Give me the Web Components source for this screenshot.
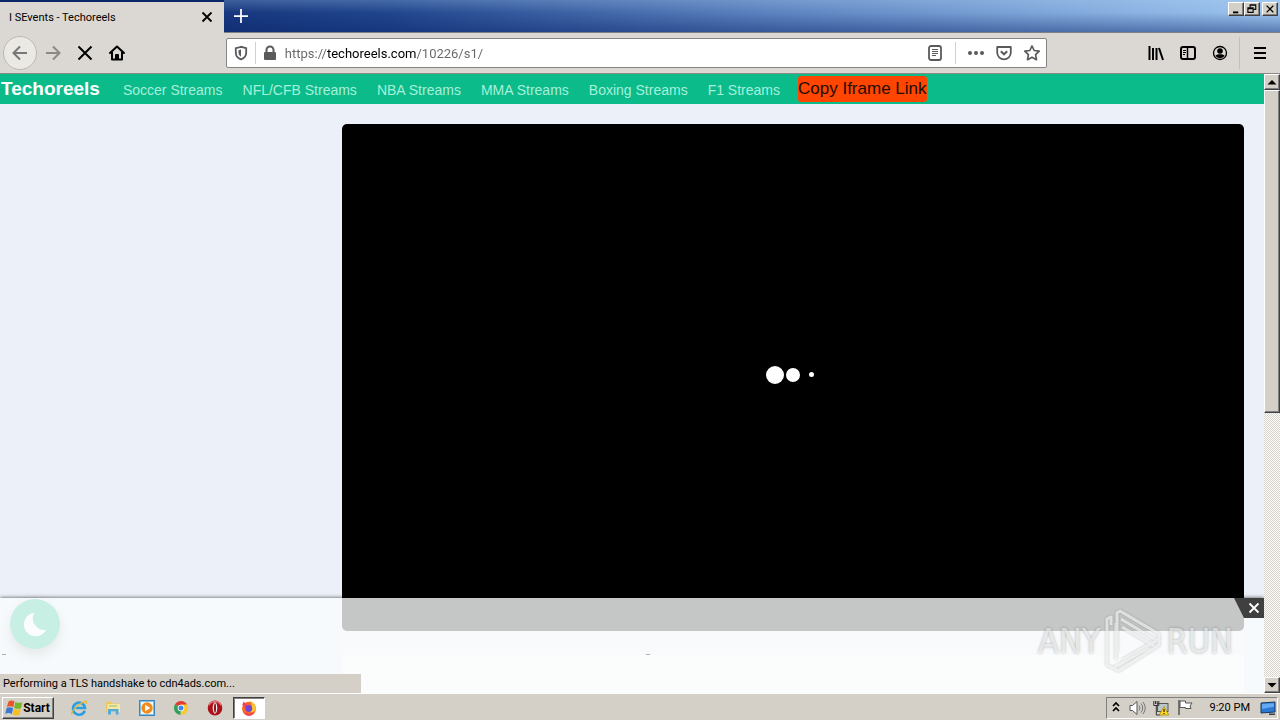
<!DOCTYPE html>
<html lang="en">
<head>
<meta charset="utf-8">
<title>I SEvents - Techoreels</title>
<style>
  html, body {
    height: 100%;
    margin: 0;
  }
  body {
    --face: #d4d0c8;
    --ui: Roboto, "Liberation Sans", sans-serif;
    font-family: "Liberation Sans", sans-serif;
    display: flex;
    flex-direction: column;
    overflow: hidden;
  }
  browser-view { flex: 1; }
</style>
</head>
<body>
<tab-strip></tab-strip>
<tool-bar></tool-bar>
<browser-view>
  <site-nav>
    <a href="#soccer">Soccer Streams</a>
    <a href="#nfl">NFL/CFB Streams</a>
    <a href="#nba">NBA Streams</a>
    <a href="#mma">MMA Streams</a>
    <a href="#boxing">Boxing Streams</a>
    <a href="#f1">F1 Streams</a>
    <button slot="action" type="button">Copy Iframe Link</button>
  </site-nav>
  <stream-page></stream-page>
  <theme-toggle slot="float"></theme-toggle>
  <ad-banner slot="float"></ad-banner>
  <any-run slot="float"></any-run>
  <status-tip slot="float">Performing a TLS handshake to cdn4ads.com...</status-tip>
</browser-view>
<task-bar></task-bar>

<script>
const ICONS = {
  close: '<path d="M3.5 3.5l9 9M12.5 3.5l-9 9" stroke="currentColor" stroke-width="1.8"/>',
  plus: '<path d="M8 0v16M0 8h16" stroke="currentColor" stroke-width="2"/>',
  back: '<path d="M15 8H1.5M8 1.5L1.5 8 8 14.5" stroke="currentColor" stroke-width="2"/>',
  forward: '<path d="M1 8h13.5M8 1.5L14.5 8 8 14.5" stroke="currentColor" stroke-width="2"/>',
  stop: '<path d="M1.5 1.5l13 13M14.5 1.5l-13 13" stroke="currentColor" stroke-width="2"/>',
  home: '<path d="M1 8L8 1.5 15 8M3 7v7.5h10V7M7 14v-4h2v4" stroke="currentColor" stroke-width="2" stroke-linejoin="round" stroke-linecap="round"/>',
  shield: '<path d="M8 1.8L2.8 3.2v4.3c0 3.5 2.2 5.900 5.200 6.900 3-1 5.200-3.400 5.200-6.900V3.200z" stroke="currentColor" stroke-width="1.8"/><path d="M8 4.600L5.500 5.300v2.500c0 1.600 1 3 2.500 3.900z" fill="currentColor"/>',
  lock: '<path d="M4.500 8V5a3.500 3.500 0 0 1 7 0v3" stroke="currentColor" stroke-width="2"/><rect x="2" y="7" width="12" height="8" rx="1" fill="currentColor"/>',
  reader: '<rect x="2" y="1" width="12" height="14" rx="2" stroke="currentColor" stroke-width="1.8"/><path d="M5 4.500h6M5 6.500h6M5 8.500h6M5 10.500h4" stroke="currentColor"/>',
  dots: '<circle cx="2" cy="8" r="2" fill="currentColor"/><circle cx="8" cy="8" r="2" fill="currentColor"/><circle cx="14" cy="8" r="2" fill="currentColor"/>',
  pocket: '<path d="M1.200 2h13.600v5.500a6.800 6.800 0 0 1-13.600 0z" stroke="currentColor" stroke-width="1.8" stroke-linejoin="round"/><path d="M4.800 6.300L8 9.300l3.200-3" stroke="currentColor" stroke-width="2"/>',
  star: '<path d="M8 1l2.200 4.500 5 .7-3.600 3.500.9 5L8 12.300l-4.500 2.400.9-5L.8 6.200l5-.7z" stroke="currentColor" stroke-width="1.700" stroke-linejoin="round"/>',
  library: '<path d="M1.500 1v14M5 3v12M8.500 3v12M11 3l4 12" stroke="currentColor" stroke-width="2"/>',
  sidebar: '<rect x="1" y="2" width="14" height="12" rx="2" stroke="currentColor" stroke-width="2"/><path d="M7.500 2v12" stroke="currentColor" stroke-width="1.500"/><path d="M3 5.500h3M3 7.500h3M3 9.500h2" stroke="currentColor"/>',
  account: '<circle cx="8" cy="8" r="6.500" stroke="currentColor" stroke-width="1.300"/><circle cx="8" cy="6" r="2.800" fill="currentColor"/><path d="M3.500 10.500c2-1.800 7-1.800 9 0-1 1.900-2.600 2.700-4.500 2.700s-3.500-.8-4.500-2.700z" fill="currentColor"/>',
  menu: '<path d="M2 3h12M2 8h12M2 13h12" stroke="currentColor" stroke-width="2"/>',
  minimize: '<path d="M4 12.500h7" stroke="currentColor" stroke-width="2.500"/>',
  restore: '<path d="M5.500 6V2.500h7.500v6h-3M5 3h8" stroke="currentColor" stroke-width="1.500"/><path d="M2.500 6.500h7v6h-7zM2.500 7.500h7" stroke="currentColor" stroke-width="1.500"/>',
  up: '<path d="M3.500 10.500h9L8 6z" fill="currentColor"/>',
  down: '<path d="M3.500 6h9L8 10.500z" fill="currentColor"/>',
  moon: '<path d="M7.500 1A7.300 7.300 0 1 0 15 11.500 7.200 7.200 0 0 1 7.500 1z" fill="currentColor"/>',
  windows: '<path d="M2.500 1.500C4.500 0 6.500.2 8.500 1.500L7.300 7.300C5.500 6.200 3 6 .8 7z" fill="#e5572a"/><path d="M9.300 2c2 1 4.500 1.200 7 .2L15 8.200c-2 1-4.700.8-6.900-.2z" fill="#76b82c"/><path d="M.6 8c2-1 4.200-.8 6.500.3L5.800 14C3.800 12.800 1.600 12.800-.8 13.700z" fill="#3c78cf"/><path d="M7.800 9c2 1 4.700 1.100 7 .1L13.500 14.700c-2 1-4.700.9-7-.2z" fill="#f5bf22"/>',
  ie: '<path d="M13.700 10.700A6 6 0 1 1 14 8H4.500" stroke="#2b9fdf" stroke-width="2.600"/><path d="M1 14.500C-.5 11.500 8 3 14 1.300c2-.5 1.800 1 1 2.600" stroke="#e6b93a" stroke-width="1.300"/>',
  folder: '<path d="M1 4V1.800h5L7.500 3.500H14V12H1z" fill="#e9c85c"/><path d="M2.500 4H15v8H2.500z" fill="#f8e7a0"/><path d="M3 14.500V9h10.500v5.500h-2.700v-3H6v3z" fill="#54a9dc"/><path d="M4 6h8" stroke="#8fbf74"/>',
  player: '<rect x=".5" y=".5" width="15" height="15" fill="#7fc0e8" stroke="#3a86b8"/><rect x="2" y="2" width="12" height="12" fill="#f4f8fb"/><circle cx="8" cy="8" r="5.700" fill="#f08a18"/><path d="M6.200 4.800v6.400L11.300 8z" fill="#fff"/>',
  chrome: '<path d="M8 8L1.900 4.500A7 7 0 0 1 14.100 4.500z" fill="#df3e31"/><path d="M8 8L1.900 4.500a7 7 0 0 0 5.500 10.500z" fill="#36a156"/><path d="M8 8h3l-3.600 7a7 7 0 0 0 6.700-10.500H8z" fill="#f7c92d"/><circle cx="8" cy="8" r="3.300" fill="#fff"/><circle cx="8" cy="8" r="2.500" fill="#4385ee"/>',
  opera: '<ellipse cx="8" cy="8" rx="7.300" ry="7.500" fill="#ad1119"/><path d="M2 5a7 7 0 0 1 12 0" stroke="#e2747a" stroke-width="1.500"/><ellipse cx="8" cy="8" rx="2.300" ry="5.700" fill="#f2eeee"/><ellipse cx="8" cy="8" rx="1" ry="4.700" fill="#8d1218"/>',
  firefox: '<circle cx="8" cy="8.700" r="7" fill="#fa6b26"/><path d="M9 .5c4 2 6 5 5.800 8.800-1.300 3-4 3.200-6 2.500 3-2 2.500-7 .2-11.300z" fill="#ffc52e"/><path d="M1.200 4.500C2 3.500 2.500 2.600 2.600 1.500c1 1 2 2.300 3.700 2.700L4 8z" fill="#f4425a"/><circle cx="7.800" cy="8.500" r="3.400" fill="#7546d3"/><path d="M2 11c2 3 8 4 11.500.5-1 3-3.500 4.200-5.500 4.200-3 0-5-1.700-6-4.700z" fill="#f43f55"/>',
  chevrons: '<path d="M5 6l3-3 3 3M5 11l3-3 3 3" stroke="currentColor" stroke-width="1.700"/>',
  speaker: '<path d="M1 5.500h2.500L8 1.500v13l-4.500-4H1z" fill="#fff" stroke="#555"/><path d="M10 5.500q2 2.500 0 5M12 3.500q3.500 4.500 0 9M14 2q4.500 6 0 12" stroke="#777"/>',
  network: '<rect x="4.500" y="3.500" width="10.500" height="8" fill="#bcc7cc" stroke="#555"/><path d="M.8 1v4.500h5V1M2.500 1v3M4.200 1v3M3.300 5.500V15h4" stroke="#333"/><path d="M11 6.500L15.800 15H6.200z" fill="#ffd820" stroke="#a88200" stroke-width=".7"/><path d="M11 9v3M11 13v1" stroke="#222" stroke-width="1.200"/>',
  flag: '<path d="M2 0v15" stroke="#555" stroke-width="1.500"/><path d="M3 1h5.500v2H15l-2 3 1 2.500H8.500v-1H3z" fill="#fff" stroke="#555"/>',
  monitor: '<path d="M1 3l14-1v10l-14 1z" fill="#2a78d2" stroke="#17385e"/><path d="M2 4l12-.8v3.500L2 9z" fill="#63aaf0"/><path d="M9 13.500h6v1.500H9z" fill="#384048"/>'
};

const BEVEL = `
  border: 1px solid;
  border-color: #fff #404040 #404040 #fff;
  box-shadow: inset -1px -1px #808080;
  background: var(--face);
`;

function define(name, html) {
  window.customElements.define(name, class extends HTMLElement {
    constructor() {
      super();
      this.attachShadow({ mode: 'open' });
      this.shadowRoot.innerHTML = html;
    }
  });
}

class AppIcon extends HTMLElement {
  constructor() {
    super();
    this.attachShadow({ mode: 'open' });
  }

  connectedCallback() {
    this.shadowRoot.innerHTML = `
      <style>
        :host { display: inline-flex; width: var(--size, 16px); height: var(--size, 16px); flex: none; }
        svg { width: 100%; height: 100%; overflow: visible; }
      </style>
      <svg viewBox="0 0 16 16" fill="none" aria-hidden="true">${ICONS[this.getAttribute('name')]}</svg>
    `;
  }
}
window.customElements.define('app-icon', AppIcon);

define('tab-strip', `
  <style>
    :host {
      display: flex;
      height: 33px;
      box-sizing: border-box;
      border-bottom: 1px solid #7d8087;
      background:
        linear-gradient(rgba(180, 215, 245, 0.25), rgba(20, 50, 120, 0) 40%, rgba(10, 36, 106, 0.45)),
        linear-gradient(90deg, #0a246a, #20458c 30%, #5c82bf 60%, #9cc4ef);
      font: 11px var(--ui);
    }
    .tab {
      display: flex;
      align-items: center;
      justify-content: space-between;
      box-sizing: border-box;
      width: 224px;
      height: 33px;
      padding: 0 9px 1px;
      border-top: 2px solid #0a246a;
      background: #dbd8d3;
    }
    button { padding: 0; border: 0; background: none; display: flex; align-items: center; justify-content: center; }
    .title { font: inherit; color: #000; }
    .new { width: 34px; height: 32px; color: #fff; --size: 14px; }
    .window { margin-left: auto; display: flex; padding: 2px 2px 0 0; --size: 12px; }
    .window button { width: 16px; height: 14px; ${BEVEL} color: #000; }
    .window button:last-child { margin-left: 2px; }
  </style>
  <div class="tab">
    <button class="title">I SEvents - Techoreels</button>
    <button aria-label="Close tab"><app-icon name="close"></app-icon></button>
  </div>
  <button class="new" aria-label="New tab"><app-icon name="plus"></app-icon></button>
  <div class="window">
    <button aria-label="Minimize"><app-icon name="minimize"></app-icon></button>
    <button aria-label="Restore"><app-icon name="restore"></app-icon></button>
    <button aria-label="Close"><app-icon name="close"></app-icon></button>
  </div>
`);

define('url-field', `
  <style>
    :host {
      display: flex;
      align-items: center;
      box-sizing: border-box;
      height: 30px;
      border: 1px solid #858585;
      border-radius: 2px;
      background: #fff;
      color: #5a5a5a;
    }
    button { display: flex; justify-content: center; width: 28px; padding: 0; border: 0; background: none; color: inherit; }
    hr { width: 1px; height: 22px; margin: 0; border: 0; background: #d0d0d0; }
    .actions { margin: 0 6px; }
    input {
      flex: 1;
      min-width: 0;
      padding: 1px 0 0;
      margin-left: 1px;
      border: 0;
      outline: 0;
      font: 13px/20px var(--ui);
      color: #666;
      /* the domain is darker than the rest of the address */
      background: linear-gradient(90deg, #666 42px, #000 42px 131px, #666 131px);
      -webkit-background-clip: text;
      background-clip: text;
      -webkit-text-fill-color: transparent;
    }
  </style>
  <button aria-label="Tracking protection"><app-icon name="shield"></app-icon></button>
  <hr>
  <button aria-label="Site information"><app-icon name="lock"></app-icon></button>
  <input type="text" aria-label="Address" value="https://techoreels.com/10226/s1/">
  <button aria-label="Reader view"><app-icon name="reader"></app-icon></button>
  <hr class="actions">
  <button aria-label="Page actions"><app-icon name="dots"></app-icon></button>
  <button aria-label="Save to Pocket"><app-icon name="pocket"></app-icon></button>
  <button aria-label="Bookmark"><app-icon name="star"></app-icon></button>
`);

define('tool-bar', `
  <style>
    :host {
      display: flex;
      align-items: center;
      box-sizing: border-box;
      height: 41px;
      padding-left: 3px;
      border-bottom: 1px solid #8d8a86;
      background: #dbd8d3;
      color: #000;
    }
    button { display: flex; align-items: center; justify-content: center; box-sizing: border-box; width: 32px; height: 32px; padding: 0; border: 0; background: none; color: inherit; }
    .back { width: 34px; height: 34px; border: 1px solid #bcb8b1; border-radius: 50%; background: #ebe9e4; color: #777; }
    .forward { color: #8b8984; }
    url-field { flex: 821; }
    .space { flex: 93; }
    .menu { margin-left: 3px; border-left: 1px solid #c3bfb8; width: 41px; }
  </style>
  <button class="back" aria-label="Back"><app-icon name="back"></app-icon></button>
  <button class="forward" aria-label="Forward"><app-icon name="forward"></app-icon></button>
  <button aria-label="Stop"><app-icon name="stop"></app-icon></button>
  <button aria-label="Home"><app-icon name="home"></app-icon></button>
  <div class="space"></div>
  <url-field></url-field>
  <div class="space"></div>
  <button aria-label="Library"><app-icon name="library"></app-icon></button>
  <button aria-label="Sidebars"><app-icon name="sidebar"></app-icon></button>
  <button aria-label="Account"><app-icon name="account"></app-icon></button>
  <button class="menu" aria-label="Menu"><app-icon name="menu"></app-icon></button>
`);

define('scroll-bar', `
  <style>
    :host {
      display: flex;
      flex-direction: column;
      width: 16px;
      background: repeating-conic-gradient(#fff 0 25%, #d4d0c8 0 50%) 0 0 / 2px 2px;
    }
    button, .thumb { box-sizing: border-box; width: 16px; padding: 0; ${BEVEL} }
    button { display: flex; align-items: center; justify-content: center; height: 16px; color: #000; }
    .track { flex: 1; }
    .thumb { height: 55%; }
  </style>
  <button aria-label="Scroll up"><app-icon name="up"></app-icon></button>
  <div class="track"><div class="thumb"></div></div>
  <button aria-label="Scroll down"><app-icon name="down"></app-icon></button>
`);

define('browser-view', `
  <style>
    :host { display: flex; min-height: 0; }
    .page {
      position: relative;
      flex: 1;
      min-width: 0;
      overflow: hidden;
      background: #ecf1f9;
    }
  </style>
  <div class="page">
    <slot></slot>
    <slot name="float"></slot>
  </div>
  <scroll-bar></scroll-bar>
`);

define('site-nav', `
  <style>
    :host {
      display: flex;
      align-items: center;
      height: 30px;
      padding-left: 1px;
      background: #0bbb89;
    }
    .brand { margin-right: 23px; font-size: 19px; font-weight: bold; color: #fff; text-decoration: none; }
    nav { display: flex; gap: 20px; margin-right: 18px; padding-top: 2px; }
    ::slotted(a) { font-size: 14px; color: #a5f0dc; text-decoration: none; }
    ::slotted(button) {
      height: 26px;
      padding: 0;
      border: 0;
      border-radius: 3px;
      background: #ff4500;
      color: #220b02;
      font: 17px "Liberation Sans", sans-serif;
    }
  </style>
  <a class="brand" href="#home">Techoreels</a>
  <nav><slot></slot></nav>
  <slot name="action"></slot>
`);

define('video-player', `
  <style>
    :host {
      display: flex;
      align-items: center;
      justify-content: center;
      aspect-ratio: 16 / 9;
      border-radius: 5px;
      background: #000;
    }
    .dots { display: flex; align-items: center; padding-bottom: 6px; }
    .dots span { display: flex; justify-content: center; width: 18px; }
    i { width: var(--d); height: var(--d); border-radius: 50%; background: #fff; }
  </style>
  <div class="dots" role="progressbar" aria-label="Loading">
    <span><i style="--d: 18px"></i></span>
    <span><i style="--d: 14px"></i></span>
    <span><i style="--d: 5px"></i></span>
  </div>
`);

define('stream-page', `
  <style>
    :host { display: flex; padding: 20px 20px 0 0; }
    aside { width: 27.5%; }
    main { flex: 1; background: #f0f1f3; }
    .card { height: 100px; margin-top: 24px; background: #fff; }
  </style>
  <aside></aside>
  <main>
    <video-player></video-player>
    <div class="card"></div>
  </main>
`);

define('theme-toggle', `
  <style>
    :host { position: absolute; left: 10px; bottom: 44px; }
    button {
      display: flex;
      align-items: center;
      justify-content: center;
      width: 50px;
      height: 50px;
      padding: 0;
      border: 0;
      border-radius: 50%;
      background: #0bbb89;
      color: #fff;
      box-shadow: 0 6px 12px rgba(0, 0, 0, 0.35);
      --size: 26px;
    }
  </style>
  <button aria-label="Dark mode"><app-icon name="moon"></app-icon></button>
`);

define('ad-banner', `
  <style>
    :host {
      position: absolute;
      left: 0;
      right: 0;
      bottom: 0;
      height: 95px;
      background: rgba(250, 252, 253, 0.79);
      box-shadow: 0 0 4px rgba(0, 0, 0, 0.7);
    }
    .slots { display: flex; padding: 56px 0 0 2px; }
    .slots div { flex: none; width: 51%; }
    .slots i { display: block; width: 4px; height: 1px; background: #aab0b6; }
    button {
      position: absolute;
      top: 0;
      right: 0;
      display: flex;
      align-items: center;
      justify-content: flex-end;
      width: 30px;
      height: 20px;
      padding: 0 2px 0 0;
      border: 0;
      background: #404040;
      color: #fff;
      clip-path: polygon(0 0, 100% 0, 100% 100%, 10px 100%);
    }
  </style>
  <div class="slots"><div><i></i></div><div><i></i></div></div>
  <button aria-label="Close ad"><app-icon name="close"></app-icon></button>
`);

define('any-run', `
  <style>
    :host {
      position: absolute;
      right: 31px;
      bottom: 20px;
      display: flex;
      align-items: center;
      gap: 4px;
      color: rgba(255, 255, 255, 0.6);
      font: 34px/64px "DejaVu Sans Condensed", "Liberation Sans", sans-serif;
      text-shadow: 0 0 3px rgba(0, 0, 0, 0.3);
      pointer-events: none;
    }
    svg { width: 58px; height: 64px; filter: drop-shadow(0 0 1px rgba(0, 0, 0, 0.35)); }
  </style>
  <span>ANY</span>
  <svg viewBox="0 0 58 64" fill="none" stroke="#fff" stroke-opacity=".65" stroke-width="3" stroke-linejoin="round" aria-hidden="true">
    <path d="M7 16V8L3 10v46l6 3 36-20M13 42V4l3-2 39 23v5l-3 1L17 10M12 14v37M18 18l32 19M18 51l37-21M14 62l-4-3M14 62l41-26v-5"/>
  </svg>
  <span>RUN</span>
`);

define('status-tip', `
  <style>
    :host {
      position: absolute;
      left: 0;
      bottom: 0;
      box-sizing: border-box;
      min-width: 361px;
      padding: 1px 3px 0;
      background: #d4d0c8;
      color: #000;
      font: 11px/18px var(--ui);
    }
  </style>
  <slot></slot>
`);

define('task-bar', `
  <style>
    :host {
      display: flex;
      align-items: center;
      box-sizing: border-box;
      height: 27px;
      padding: 1px 2px 0;
      border-top: 1px solid #fff;
      background: var(--face);
      font: 11px var(--ui);
      color: #000;
    }
    button { display: flex; align-items: center; justify-content: center; box-sizing: border-box; height: 22px; padding: 0; border: 0; background: none; color: inherit; font: inherit; }
    .start { width: 52px; gap: 1px; margin-right: 9px; ${BEVEL} font: bold 12px var(--ui); }
    .apps { display: flex; gap: 2px; }
    .apps button { width: 32px; }
    .apps .active { border: 1px solid; border-color: #404040 #fff #fff #404040; background: #fff; box-shadow: inset 1px 1px #808080; }
    .tray {
      display: flex;
      align-items: center;
      box-sizing: border-box;
      height: 22px;
      margin-left: auto;
      border: 1px solid;
      border-color: #808080 #fff #fff #808080;
    }
    .tray button { width: 24px; }
    .tray button:first-child { width: 18px; }
    .tray time { margin: 0 9px 0 13px; }
    .tray button:last-child { width: 18px; }
  </style>
  <button class="start"><app-icon name="windows"></app-icon>Start</button>
  <div class="apps">
    <button aria-label="Internet Explorer"><app-icon name="ie"></app-icon></button>
    <button aria-label="Explorer"><app-icon name="folder"></app-icon></button>
    <button aria-label="Media Player"><app-icon name="player"></app-icon></button>
    <button aria-label="Chrome"><app-icon name="chrome"></app-icon></button>
    <button aria-label="Opera"><app-icon name="opera"></app-icon></button>
    <button class="active" aria-label="Firefox"><app-icon name="firefox"></app-icon></button>
  </div>
  <div class="tray">
    <button aria-label="Hidden icons"><app-icon name="chevrons"></app-icon></button>
    <button aria-label="Volume"><app-icon name="speaker"></app-icon></button>
    <button aria-label="Network"><app-icon name="network"></app-icon></button>
    <button aria-label="Action Center"><app-icon name="flag"></app-icon></button>
    <time>9:20 PM</time>
    <button aria-label="Show desktop"><app-icon name="monitor"></app-icon></button>
  </div>
`);
</script>
</body>
</html>
